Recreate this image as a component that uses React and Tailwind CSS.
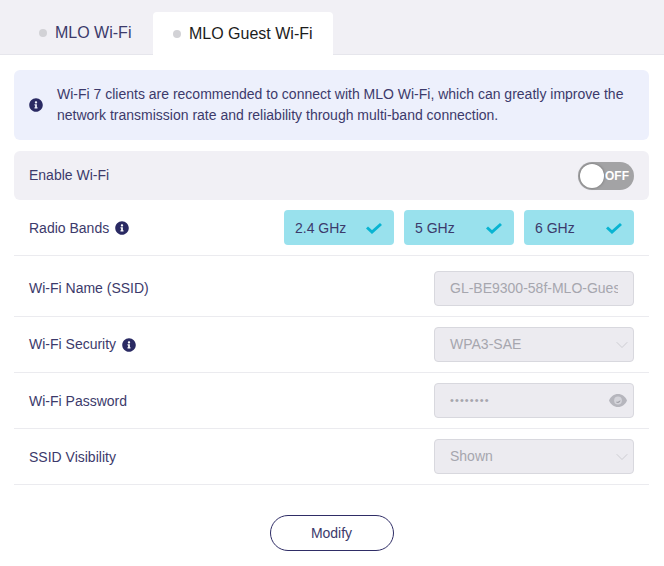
import { ChevronDown } from 'lucide-react';

function InfoIcon({ className }) {
  return (
    <svg viewBox="0 0 512 512" className={className} fill="#2a2a63">
      <path d="M256 8C119 8 8 119 8 256s111 248 248 248 248-111 248-248S393 8 256 8zm0 110c23 0 42 19 42 42s-19 42-42 42-42-19-42-42 19-42 42-42zm56 254c0 7-5 12-12 12h-88c-7 0-12-5-12-12v-24c0-7 5-12 12-12h12v-64h-12c-7 0-12-5-12-12v-24c0-7 5-12 12-12h64c7 0 12 5 12 12v100h12c7 0 12 5 12 12v24z" />
    </svg>
  );
}

function EyeIcon() {
  return (
    <svg viewBox="0 0 18 13" className="w-[18px] h-[13px]">
      <path d="M9 0C5 0 1.700 2.600 0 6.500c1.700 3.900 5 6.500 9 6.500s7.300-2.600 9-6.500C16.300 2.600 13 0 9 0z" fill="#b6b6bd" />
      <circle cx="9" cy="6.500" r="3.900" fill="#d4d4da" />
      <path d="M11.400 6a2.500 2.500 0 0 1-4.600 1.700c1.700.4 3.500-.2 4.600-1.700z" fill="#a2a2aa" />
    </svg>
  );
}

function CheckIcon() {
  return (
    <svg viewBox="0 0 16 12" className="w-[16px] h-[12px]" fill="none" stroke="#08b4d2" strokeWidth="3">
      <polyline points="1,5.500 6,10 15,2" />
    </svg>
  );
}

function Chevron() {
  return <ChevronDown className="w-[20px] h-[20px] -mr-[5px] text-[#c9c9cf]" strokeWidth={1.1} />;
}

function Row({ label, info, children, labelClass = 'pt-[1px]' }) {
  return (
    <div className="flex items-center justify-between h-[56px] px-[15px] border-b border-[#ebebef]">
      <div className={`flex items-center gap-[6px] text-[14px] text-[#3c3a6b] ${labelClass}`}>
        {label}
        {info && <InfoIcon className="w-[14px] h-[14px]" />}
      </div>
      {children}
    </div>
  );
}

function Field({ children, right }) {
  return (
    <div className="flex items-center justify-between w-[200px] h-[35px] pl-[15px] pr-[6px] rounded border border-[#d8d8de] bg-[#ecebf0] text-[14px] text-[#a6a6ae] overflow-hidden whitespace-nowrap">
      {children}
      {right}
    </div>
  );
}

function Band({ name }) {
  return (
    <div className="flex items-center justify-between w-[110px] h-[35px] pl-[11px] pr-[12px] rounded bg-[#99e1ed] text-[14px] text-[#3c3a6b]">
      <span className="pt-[1px]">{name}</span>
      <CheckIcon />
    </div>
  );
}

export default function App() {
  return (
    <div className="w-[664px] h-[566px] bg-white overflow-hidden font-['Liberation_Sans',Arial,sans-serif]">
      <div className="flex items-end h-[55px] pl-[14px] bg-[#f1f0f5] border-b border-[#e6e6ec]">
        <div className="flex items-center w-[139px] h-[43px] pl-[25px] gap-[8px] text-[16px] text-[#3c3a6b]">
          <span className="w-[8px] h-[8px] rounded-full bg-[#d2d2d6]" />
          MLO Wi-Fi
        </div>
        <div className="flex items-center w-[180px] h-[43px] -mb-px pl-[20px] gap-[8px] rounded-t bg-white text-[16px] text-[#1c1c1c]">
          <span className="w-[8px] h-[8px] rounded-full bg-[#d2d2d6]" />
          MLO Guest Wi-Fi
        </div>
      </div>

      <div className="pl-[14px] pr-[15px]">
        <div className="flex items-center h-[70px] mt-[15px] pl-[15px] pr-[15px] gap-[14px] rounded-md bg-[#edf0fc]">
          <InfoIcon className="w-[14px] h-[14px] shrink-0" />
          <p className="text-[14px] leading-[21px] text-[#3c3a6b]">
            Wi-Fi 7 clients are recommended to connect with MLO Wi-Fi, which can greatly improve the network transmission rate and reliability through multi-band connection.
          </p>
        </div>

        <div className="flex items-center justify-between h-[49px] mt-[11px] px-[15px] rounded-md bg-[#f1f0f5] text-[14px] text-[#3c3a6b]">
          Enable Wi-Fi
          <div className="flex items-center w-[56px] h-[28px] p-[2px] rounded-full bg-[#a3a3a5]">
            <span className="w-[24px] h-[24px] rounded-full bg-white shadow-[0_0_3px_rgba(0,0,0,0.35)]" />
            <span className="ml-[1px] text-[12px] font-bold text-white">OFF</span>
          </div>
        </div>

        <Row label="Radio Bands" info>
          <div className="flex gap-[10px]">
            <Band name="2.4 GHz" />
            <Band name="5 GHz" />
            <Band name="6 GHz" />
          </div>
        </Row>
        <div className="flex items-center justify-between h-[61px] pt-[5px] px-[15px] border-b border-[#ebebef] text-[14px] text-[#3c3a6b]">
          Wi-Fi Name (SSID)
          <Field><span className="w-[168px] overflow-hidden">GL-BE9300-58f-MLO-Guest</span></Field>
        </div>
        <Row label="Wi-Fi Security" info labelClass="">
          <Field right={<Chevron />}>WPA3-SAE</Field>
        </Row>
        <Row label="Wi-Fi Password">
          <Field right={<EyeIcon />}><span className="text-[11px] tracking-[1.1px]">••••••••</span></Field>
        </Row>
        <Row label="SSID Visibility">
          <Field right={<Chevron />}>Shown</Field>
        </Row>

        <div className="flex justify-center mt-[30px]">
          <button className="w-[124px] h-[36px] rounded-full border border-[#2f2d66] bg-white text-[14px] text-[#3c3a6b]">Modify</button>
        </div>
      </div>
    </div>
  );
}
